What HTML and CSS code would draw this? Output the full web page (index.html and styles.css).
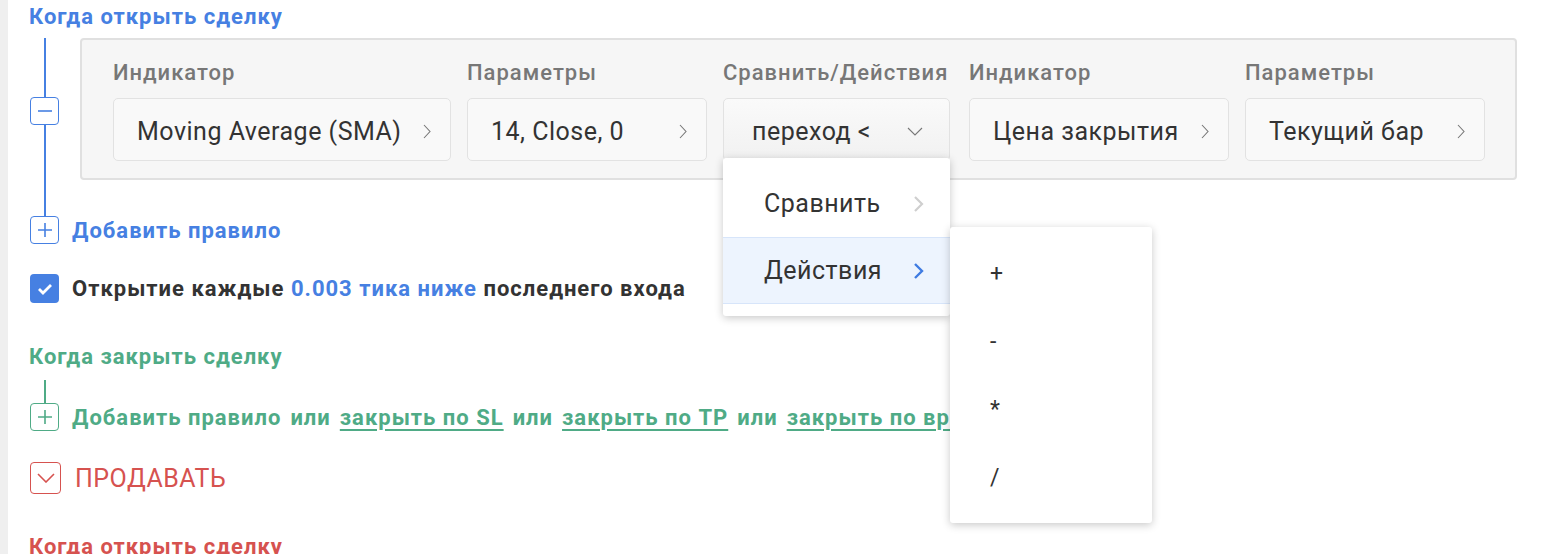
FILE: index.html
```html
<!DOCTYPE html>
<html lang="ru">

<head>
    <meta charset="UTF-8">
    <meta name="viewport" content="width=device-width, initial-scale=1.0">
    <title>Стратегия</title>
    <link rel="stylesheet" href="styles.css">
</head>

<body>
    <div class="page">
        <div class="side-strip"></div>

        <main class="content">
            <!-- Open position rules -->
            <section class="block block-blue">
                <h3 class="block-title">Когда открыть сделку</h3>

                <div class="rule-row">
                    <div class="rail">
                        <span class="rail-line rail-top"></span>
                        <span class="tree-btn">
                            <svg width="14" height="2" viewBox="0 0 14 2"><line x1="0" y1="1" x2="14" y2="1" stroke="currentColor" stroke-width="1.6"/></svg>
                        </span>
                        <span class="rail-line"></span>
                    </div>

                    <div class="rule-card">
                        <div class="field col-1">
                            <div class="field-label">Индикатор</div>
                            <div class="field-box">
                                <span>Moving Average (SMA)</span>
                                <svg class="chev" width="8" height="15" viewBox="0 0 8 15"><polyline points="1,1 7,7.5 1,14" fill="none" stroke="#777" stroke-width="1.1"/></svg>
                            </div>
                        </div>
                        <div class="field col-2">
                            <div class="field-label">Параметры</div>
                            <div class="field-box">
                                <span>14, Close, 0</span>
                                <svg class="chev" width="8" height="15" viewBox="0 0 8 15"><polyline points="1,1 7,7.5 1,14" fill="none" stroke="#777" stroke-width="1.1"/></svg>
                            </div>
                        </div>
                        <div class="field col-3">
                            <div class="field-label">Сравнить/Действия</div>
                            <div class="field-box select-box">
                                <span>переход &lt;</span>
                                <svg class="chev" width="16" height="9" viewBox="0 0 16 9"><polyline points="1,1 8,8 15,1" fill="none" stroke="#777" stroke-width="1.1"/></svg>
                            </div>

                            <!-- open dropdown -->
                            <div class="menu">
                                <div class="menu-item">
                                    <span>Сравнить</span>
                                    <svg width="11" height="18" viewBox="0 0 11 18"><polyline points="2,2 9,9 2,16" fill="none" stroke="#cfcfcf" stroke-width="2.2"/></svg>
                                </div>
                                <div class="menu-item active">
                                    <span>Действия</span>
                                    <svg width="11" height="18" viewBox="0 0 11 18"><polyline points="2,2 9,9 2,16" fill="none" stroke="#3f7be2" stroke-width="2.4"/></svg>
                                </div>

                                <div class="submenu">
                                    <div class="submenu-item">+</div>
                                    <div class="submenu-item">-</div>
                                    <div class="submenu-item">*</div>
                                    <div class="submenu-item">/</div>
                                </div>
                            </div>
                        </div>
                        <div class="field col-4">
                            <div class="field-label">Индикатор</div>
                            <div class="field-box">
                                <span>Цена закрытия</span>
                                <svg class="chev" width="8" height="15" viewBox="0 0 8 15"><polyline points="1,1 7,7.5 1,14" fill="none" stroke="#777" stroke-width="1.1"/></svg>
                            </div>
                        </div>
                        <div class="field col-5">
                            <div class="field-label">Параметры</div>
                            <div class="field-box">
                                <span>Текущий бар</span>
                                <svg class="chev" width="8" height="15" viewBox="0 0 8 15"><polyline points="1,1 7,7.5 1,14" fill="none" stroke="#777" stroke-width="1.1"/></svg>
                            </div>
                        </div>
                    </div>
                </div>

                <div class="add-row">
                    <span class="tree-btn">
                        <svg width="14" height="14" viewBox="0 0 14 14"><path d="M7 0v14M0 7h14" stroke="currentColor" stroke-width="1.6"/></svg>
                    </span>
                    <span class="add-text">Добавить правило</span>
                </div>

                <label class="check-row">
                    <span class="checkbox">
                        <svg width="16" height="12" viewBox="0 0 16 12"><polyline points="2,6 6,10 14,2" fill="none" stroke="#fff" stroke-width="2.8"/></svg>
                    </span>
                    <span>Открытие каждые <span class="hl">0.003 тика ниже</span> последнего входа</span>
                </label>
            </section>

            <!-- Close position rules -->
            <section class="block block-green">
                <h3 class="block-title">Когда закрыть сделку</h3>
                <div class="connector"></div>
                <div class="add-row">
                    <span class="tree-btn">
                        <svg width="14" height="14" viewBox="0 0 14 14"><path d="M7 0v14M0 7h14" stroke="currentColor" stroke-width="1.6"/></svg>
                    </span>
                    <span class="add-text links">
                        <span>Добавить правило</span>
                        <span>или</span>
                        <a href="#">закрыть по SL</a>
                        <span>или</span>
                        <a href="#">закрыть по TP</a>
                        <span>или</span>
                        <a href="#">закрыть по времени</a>
                    </span>
                </div>
            </section>

            <!-- Sell side -->
            <div class="side-toggle">
                <span class="toggle-btn">
                    <svg width="18" height="10" viewBox="0 0 18 10"><polyline points="1,1 9,9 17,1" fill="none" stroke="currentColor" stroke-width="1.6"/></svg>
                </span>
                <span>ПРОДАВАТЬ</span>
            </div>

            <section class="block block-red">
                <h3 class="block-title">Когда открыть сделку</h3>
            </section>
        </main>
    </div>
</body>

</html>
```

FILE: styles.css
```css
body {
    font-family: Roboto, "Liberation Sans", sans-serif;
    background-color: #fff;
    color: #333;
    margin: 0;
    padding: 0;
    overflow: hidden;
}

.page {
    display: flex;
    min-height: 600px;
}

.side-strip {
    width: 8px;
    background-color: #efefef;
    flex-shrink: 0;
}

.content {
    flex: 1;
    padding: 2px 0 0 21px;
}

/* colour themes */
.block-blue {
    --accent: #4680e2;
}

.block-green {
    --accent: #4fab86;
}

.block-red {
    --accent: #d6524f;
}

.block-title {
    margin: 0 0 6px;
    font-size: 22px;
    line-height: 30px;
    letter-spacing: 1px;
    font-weight: 700;
    color: var(--accent);
}

/* rule tree */
.rule-row {
    display: flex;
    align-items: stretch;
}

.rail {
    width: 29px;
    margin-left: 1px;
    display: flex;
    flex-direction: column;
    align-items: center;
    color: var(--accent);
}

.rail-line {
    width: 2px;
    flex: 1;
    background-color: var(--accent);
}

.rail-line.rail-top {
    flex: 0 0 59px;
}

.tree-btn {
    box-sizing: border-box;
    width: 29px;
    height: 28px;
    border: 1.6px solid var(--accent);
    border-radius: 4px;
    display: flex;
    align-items: center;
    justify-content: center;
    color: var(--accent);
    background-color: #fff;
    flex-shrink: 0;
}

.rule-card {
    display: flex;
    gap: 16px;
    margin: 0 0 36px 21px;
    padding: 21px 30px 17px 31px;
    width: 1372px;
    background-color: #f6f6f6;
    border: 2px solid #e0e0e0;
    border-radius: 4px;
}

.field {
    position: relative;
}

.col-1 { width: 338px; }
.col-2 { width: 240px; }
.col-3 { width: 230px; }
.col-4 { width: 260px; }
.col-5 { width: 240px; }

.field-label {
    font-size: 22px;
    line-height: 24px;
    letter-spacing: 1px;
    font-weight: 500;
    color: #777;
    margin-bottom: 13px;
    white-space: nowrap;
}

.field-box {
    box-sizing: border-box;
    height: 63px;
    display: flex;
    align-items: center;
    justify-content: space-between;
    padding: 3px 19px 0 23px;
    background-color: #f9f9f9;
    border: 1.5px solid #e2e2e2;
    border-radius: 5px;
    font-size: 25px;
    letter-spacing: 0.5px;
    color: #333;
    white-space: nowrap;
}

.select-box {
    width: 227px;
    padding: 3px 26px 0 28px;
    background: linear-gradient(#fafafa, #f1f1f1);
}

/* dropdown */
.menu {
    position: absolute;
    top: 97px;
    left: 0;
    width: 227px;
    padding: 12px 0;
    background-color: #fff;
    border-radius: 3px;
    box-shadow: 0 2px 8px rgba(0, 0, 0, 0.22);
    z-index: 5;
}

.menu-item {
    box-sizing: border-box;
    height: 67px;
    display: flex;
    align-items: center;
    justify-content: space-between;
    padding: 0 26px 0 41px;
    font-size: 25px;
    letter-spacing: 0.5px;
    color: #333;
}

.menu-item.active {
    background-color: #edf4fe;
    border-top: 1.5px solid #d7e5fa;
    border-bottom: 1.5px solid #d7e5fa;
}

.submenu {
    position: absolute;
    top: 69px;
    left: 100%;
    width: 202px;
    padding: 12px 0;
    background-color: #fff;
    border-radius: 3px;
    box-shadow: 0 2px 8px rgba(0, 0, 0, 0.22);
}

.submenu-item {
    height: 68px;
    display: flex;
    align-items: center;
    padding-left: 40px;
    font-size: 23px;
    color: #333;
}

/* add rule / checkbox rows */
.add-row {
    display: flex;
    align-items: center;
    gap: 13px;
    padding-left: 1px;
}

.add-text {
    font-size: 22px;
    letter-spacing: 1px;
    font-weight: 700;
    color: var(--accent);
    white-space: nowrap;
}

.links {
    display: flex;
    gap: 9px;
}

.links a {
    color: var(--accent);
    text-decoration: underline;
    text-decoration-thickness: 2px;
    text-underline-offset: 4px;
}

.check-row {
    display: flex;
    align-items: center;
    gap: 13px;
    margin-top: 30px;
    padding-left: 1px;
    font-size: 22px;
    letter-spacing: 1px;
    font-weight: 700;
    color: #333;
}

.checkbox {
    width: 29px;
    height: 29px;
    border-radius: 4px;
    background-color: #4680e2;
    display: flex;
    align-items: center;
    justify-content: center;
}

.hl {
    color: #4680e2;
}

.block-green {
    margin-top: 39px;
}

.block-green .block-title {
    margin-bottom: 8px;
}

.connector {
    width: 2px;
    height: 23px;
    margin-left: 15px;
    background-color: var(--accent);
}

/* sell toggle */
.side-toggle {
    display: flex;
    align-items: center;
    gap: 14px;
    margin-top: 31px;
    padding-left: 1px;
    font-size: 25px;
    letter-spacing: 0.5px;
    color: #d6524f;
}

.toggle-btn {
    box-sizing: border-box;
    width: 31px;
    height: 32px;
    border: 1.6px solid #d6524f;
    border-radius: 4px;
    display: flex;
    align-items: center;
    justify-content: center;
}

.block-red {
    margin-top: 38px;
}
```
